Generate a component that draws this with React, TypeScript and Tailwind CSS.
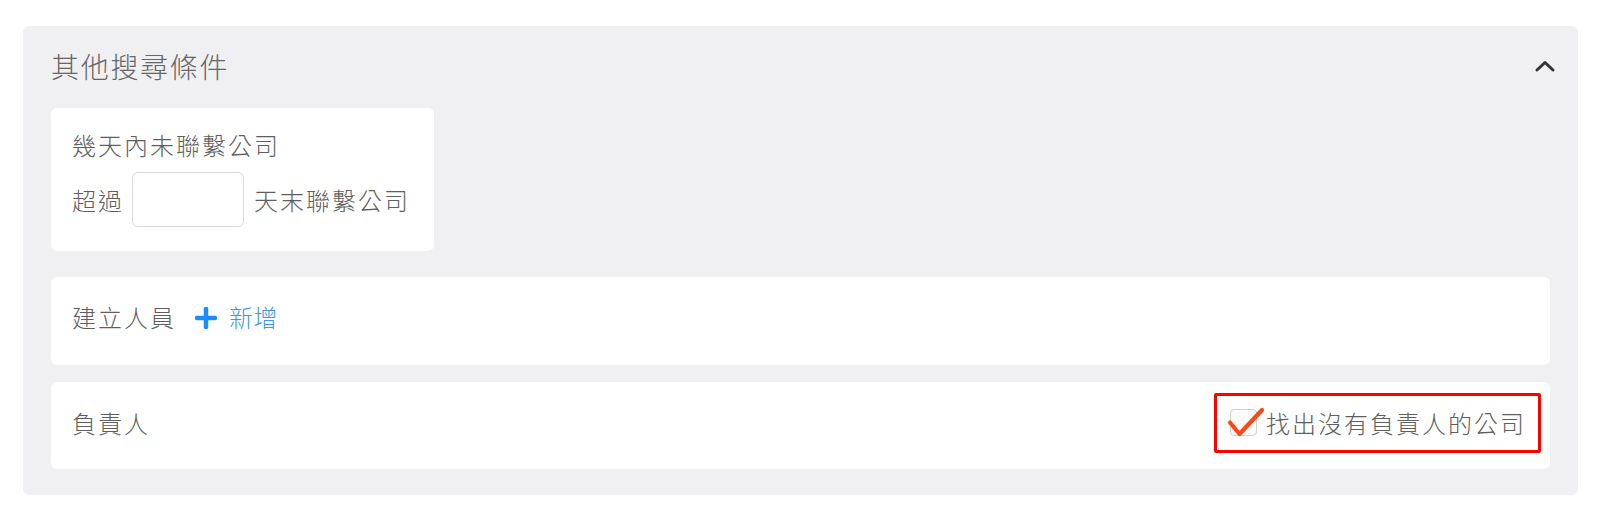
import React from "react";

const font = { fontFamily: '"Noto Sans CJK TC", "Noto Sans", sans-serif' };

export default function App() {
  return (
    <div className="w-[1600px] h-[520px] bg-white pt-[26px] pl-[23px]" style={font}>
      <div className="w-[1555px] h-[469px] bg-[#f0f0f2] rounded-[6px] px-[28px] pt-[22px]">
        <div className="h-[36px] flex items-center justify-between mb-[24px]">
          <div className="text-[28px] leading-[36px] tracking-[1.7px] font-light text-[#666666]">其他搜尋條件</div>
          <svg width="22" height="14" viewBox="0 0 22 14" className="mr-[-6px]">
            <path d="M3 11 L11 3.5 L19 11" fill="none" stroke="#333333" strokeWidth="3" strokeLinecap="round" strokeLinejoin="round" />
          </svg>
        </div>

        <div className="inline-flex flex-col bg-white rounded-[6px] pl-[21px] pr-[24px] pt-[22px] pb-[24px] text-[24px] font-light text-[#5e5e5e] tracking-[2px]">
          <div className="leading-[30px] h-[30px]">幾天內未聯繫公司</div>
          <div className="flex items-center mt-[12px]">
            <span className="leading-[30px]">超過</span>
            <div className="w-[112px] h-[55px] ml-[8px] mr-[10px] bg-white border border-[#d9d9d9] rounded-[6px]" />
            <span className="leading-[30px]">天末聯繫公司</span>
          </div>
        </div>

        <div className="mt-[26px] h-[88px] bg-white rounded-[6px] px-[21px] pb-[8px] flex items-center text-[24px] font-light text-[#5e5e5e]">
          <span className="tracking-[2px] leading-[30px]">建立人員</span>
          <svg width="22" height="22" viewBox="0 0 22 22" className="ml-[19px] mt-[2px]">
            <path d="M11 2 V20 M2 11 H20" stroke="#1a8cff" strokeWidth="4.5" strokeLinecap="round" />
          </svg>
          <span className="ml-[12px] tracking-[0.5px] leading-[30px] text-[#3a98ea]">新增</span>
        </div>

        <div className="mt-[17px] h-[87px] bg-white rounded-[6px] pl-[21px] pr-[9px] pb-[6px] flex items-center justify-between text-[24px] font-light text-[#5e5e5e]">
          <span className="tracking-[2px] leading-[30px]">負責人</span>
          <label className="flex items-center border-[3px] border-[#ff0000] rounded-[2px] h-[60px] pl-[13px] pr-[14px]">
            <span className="relative w-[27px] h-[27px] rounded-[4px] border border-[#d0d0d0] bg-[#fafafa]">
              <svg width="40" height="34" viewBox="0 0 40 34" className="absolute left-[-4px] top-[-4px] overflow-visible">
                <path d="M3 16.5 L12.5 28 L35 4" fill="none" stroke="#ff4616" strokeWidth="4.2" strokeLinecap="round" strokeLinejoin="round" />
              </svg>
            </span>
            <span className="ml-[9px] tracking-[2px] leading-[30px] mr-[-2px]">找出沒有負責人的公司</span>
          </label>
        </div>
      </div>
    </div>
  );
}
